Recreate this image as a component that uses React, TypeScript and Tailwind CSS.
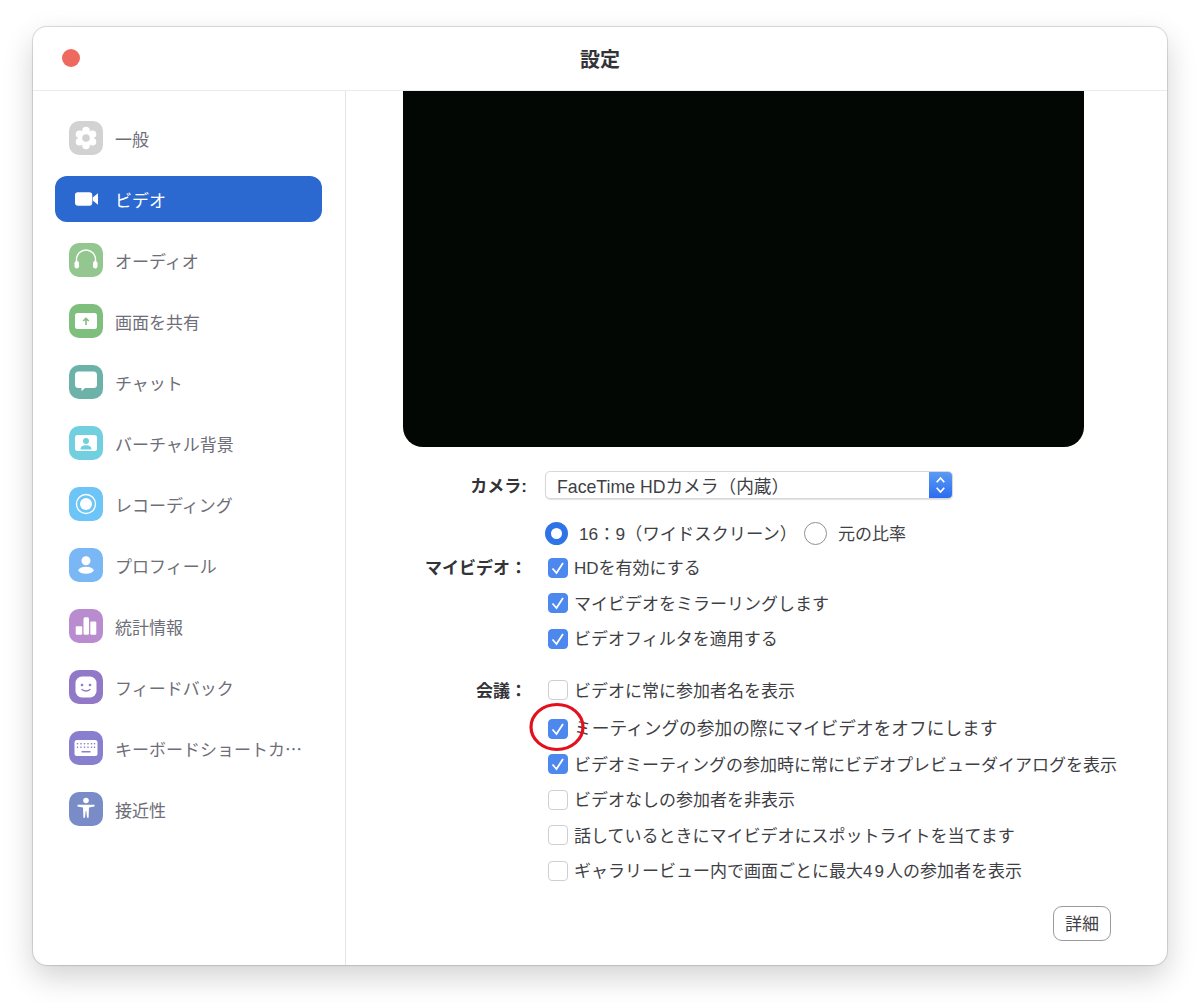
import type { ReactNode } from "react";

const font = { fontFamily: '"Liberation Sans", "Noto Sans CJK JP", sans-serif' };

function Tile({ bg, children }: { bg: string; children: ReactNode }) {
  return (
    <div className={`flex size-[34px] shrink-0 items-center justify-center rounded-[10px] ${bg}`}>
      <svg viewBox="0 0 34 34" className="size-[34px]">
        {children}
      </svg>
    </div>
  );
}

const navItems = [
  {
    label: "一般",
    icon: (
      <Tile bg="bg-[#d2d2d2]">
        <g fill="#fff">
          <circle cx="17" cy="9.500" r="3.800" />
          <circle cx="17" cy="24.500" r="3.800" />
          <circle cx="10.500" cy="13.250" r="3.800" />
          <circle cx="23.500" cy="13.250" r="3.800" />
          <circle cx="10.500" cy="20.750" r="3.800" />
          <circle cx="23.500" cy="20.750" r="3.800" />
          <circle cx="17" cy="17" r="7.500" />
        </g>
        <circle cx="17" cy="17" r="3.800" fill="#d2d2d2" />
      </Tile>
    ),
  },
  {
    label: "ビデオ",
    active: true,
    icon: (
      <svg viewBox="0 0 24 16" className="ml-[6px] mr-[17px] h-[16px] w-[23px] shrink-0">
        <rect x="0" y="1" width="18" height="14" rx="3" fill="#fff" />
        <path d="M18.500 6.500 24 2v12l-5.500-4.500z" fill="#fff" />
      </svg>
    ),
  },
  {
    label: "オーディオ",
    icon: (
      <Tile bg="bg-[#93c78f]">
        <path d="M7.500 20v-3.500a9.500 9.500 0 0 1 19 0V20" fill="none" stroke="#fff" strokeWidth="1.400" />
        <rect x="5.500" y="18" width="4.500" height="7.500" rx="2.200" fill="#fff" />
        <rect x="24" y="18" width="4.500" height="7.500" rx="2.200" fill="#fff" />
      </Tile>
    ),
  },
  {
    label: "画面を共有",
    icon: (
      <Tile bg="bg-[#7fbf7e]">
        <rect x="6" y="9" width="22" height="16" rx="2.500" fill="#fff" />
        <path d="M17 21v-6.500M14.300 17l2.700-2.700 2.700 2.700" fill="none" stroke="#7fbf7e" strokeWidth="1.600" />
      </Tile>
    ),
  },
  {
    label: "チャット",
    icon: (
      <Tile bg="bg-[#6db2a9]">
        <path
          d="M9.500 6.500h15a3.500 3.500 0 0 1 3.500 3.500v9.500a3.500 3.500 0 0 1-3.500 3.500H16l-3.500 3.200V23H9.500A3.500 3.500 0 0 1 6 19.500V10a3.500 3.500 0 0 1 3.500-3.500z"
          fill="#fff"
        />
      </Tile>
    ),
  },
  {
    label: "バーチャル背景",
    icon: (
      <Tile bg="bg-[#72cfe0]">
        <rect x="6" y="9" width="22" height="16" rx="2.500" fill="#fff" />
        <circle cx="17" cy="15" r="3" fill="#72cfe0" />
        <path d="M11.500 23.500c0-3 2.500-4.200 5.500-4.200s5.500 1.200 5.500 4.200z" fill="#72cfe0" />
      </Tile>
    ),
  },
  {
    label: "レコーディング",
    icon: (
      <Tile bg="bg-[#6dc4f6]">
        <circle cx="17" cy="17" r="9.500" fill="none" stroke="#fff" strokeWidth="1.300" />
        <circle cx="17" cy="17" r="6" fill="#fff" />
      </Tile>
    ),
  },
  {
    label: "プロフィール",
    icon: (
      <Tile bg="bg-[#7ab7f5]">
        <circle cx="17" cy="12.800" r="4.500" fill="#fff" />
        <ellipse cx="17" cy="22.300" rx="7.600" ry="3.500" fill="#fff" />
      </Tile>
    ),
  },
  {
    label: "統計情報",
    icon: (
      <Tile bg="bg-[#b98ccf]">
        <rect x="6.700" y="17.300" width="6.500" height="8.400" rx="1" fill="#fff" />
        <rect x="14.500" y="8.300" width="5.500" height="17.400" rx="1.500" fill="#fff" />
        <rect x="21.300" y="12.500" width="6" height="13.200" rx="1" fill="#fff" />
      </Tile>
    ),
  },
  {
    label: "フィードバック",
    icon: (
      <Tile bg="bg-[#9279c8]">
        <rect x="6.500" y="6.500" width="21" height="21" rx="6.500" fill="#fff" />
        <circle cx="13" cy="15" r="1.300" fill="#9279c8" />
        <circle cx="21" cy="15" r="1.300" fill="#9279c8" />
        <path d="M13 19.500c2.200 2 5.800 2 8 0" fill="none" stroke="#9279c8" strokeWidth="1.300" strokeLinecap="round" />
      </Tile>
    ),
  },
  {
    label: "キーボードショートカ…",
    icon: (
      <Tile bg="bg-[#8880cf]">
        <rect x="5.500" y="9" width="23" height="16" rx="2.500" fill="#fff" />
        {[8.5, 12, 15.5, 19, 22.5, 25.5].map((x) => (
          <g key={x} fill="#8880cf">
            <rect x={x - 0.7} y="12" width="1.400" height="1.400" />
            <rect x={x - 0.7} y="15.500" width="1.400" height="1.400" />
          </g>
        ))}
        <rect x="12.500" y="20" width="9" height="1.500" fill="#8880cf" />
      </Tile>
    ),
  },
  {
    label: "接近性",
    icon: (
      <Tile bg="bg-[#7a8cc8]">
        <circle cx="17" cy="8.500" r="2.800" fill="#fff" />
        <path
          d="M8.500 12.700H25.500V14.500L20 15.500 19.600 25.700H18L17.300 19H16.700L16 25.700H14.400L14 15.500 8.500 14.500z"
          fill="#fff"
        />
      </Tile>
    ),
  },
];

function Sidebar() {
  return (
    <aside className="flex w-[313px] shrink-0 flex-col gap-[15px] border-r border-[#e4e4e6] pl-[22px] pr-[23px] pt-[24px]">
      {navItems.map((item) => (
        <div
          key={item.label}
          className={`flex h-[46px] items-center gap-[12px] rounded-[12px] pl-[14px] pr-[8px] font-['Noto_Sans_CJK_JP',sans-serif] text-[17px] ${
            item.active ? "bg-[#2b69d0] text-white" : "text-[#6e6e78]"
          }`}
        >
          {item.icon}
          <span className={`whitespace-nowrap pt-[1px] ${item.active ? "-ml-[12px]" : ""}`}>{item.label}</span>
        </div>
      ))}
    </aside>
  );
}

function Checkbox({ checked }: { checked?: boolean }) {
  return (
    <span
      className={`flex size-[20px] shrink-0 items-center justify-center rounded-[4px] border ${
        checked ? "border-[#4c88ee] bg-[#4c88ee]" : "border-[#cfcfd2] bg-white"
      }`}
    >
      {checked && (
        <svg viewBox="0 0 20 20" className="size-[20px] shrink-0">
          <path d="M4.500 10.500 8.500 15 15 5" fill="none" stroke="#fff" strokeWidth="1.800" />
        </svg>
      )}
    </span>
  );
}

function CheckRow({
  label,
  text,
  checked,
  className = "",
  textClass = "text-[17px]",
}: {
  label?: string;
  text: ReactNode;
  checked?: boolean;
  className?: string;
  textClass?: string;
}) {
  return (
    <div className={`flex h-[35.500px] items-center ${className}`}>
      <div className="w-[181px] shrink-0 pt-[2px] text-right text-[17px] font-bold text-[#333338]">{label}</div>
      <div className="ml-[21px] flex items-center gap-[6px] whitespace-nowrap text-[#3f3f46]">
        <Checkbox checked={checked} />
        <span className={`pt-[2px] ${textClass}`}>{text}</span>
      </div>
    </div>
  );
}

function CameraPane() {
  return (
    <main className="relative flex min-w-0 flex-1 flex-col">
      <div className="ml-[57px] h-[356px] w-[681px] shrink-0 rounded-b-[20px] bg-[#030703]" />

      <div className="mt-[24px] flex h-[28px] items-center">
        <div className="w-[181px] shrink-0 pt-[4px] text-right text-[17px] font-bold text-[#333338]">カメラ:</div>
        <div className="ml-[18px] flex h-[28px] w-[408px] overflow-hidden rounded-[5px] border border-[#d8d8da] bg-white shadow-[0_1px_1px_rgba(0,0,0,0.12)]">
          <div className="flex-1 pl-[11px] pt-[1px] text-[17.700px] leading-[28px] text-[#3f3f46]">FaceTime HDカメラ（内蔵）</div>
          <div className="flex w-[23px] items-center justify-center bg-gradient-to-b from-[#5b9bf3] to-[#2b6cf0]">
            <svg viewBox="0 0 12 20" className="h-[22px] w-[13px]">
              <path d="M2.500 7.500 6 3.500 9.500 7.500M2.500 12.500 6 16.500 9.500 12.500" fill="none" stroke="#fff" strokeWidth="1.600" />
            </svg>
          </div>
        </div>
      </div>

      <div className="ml-[199px] mt-[22px] flex h-[24px] items-center whitespace-nowrap text-[#3f3f46]">
        <span className="size-[23px] rounded-full border-[6px] border-[#2f74e6] bg-white" />
        <span className="ml-[11px] pt-[4px] text-[17.300px]">16：9（ワイドスクリーン）</span>
        <span className="ml-[7px] size-[23px] rounded-full border border-[#8f8f95] bg-white" />
        <span className="ml-[11px] pt-[4px] text-[17px]">元の比率</span>
      </div>

      <div className="mt-[5px]">
        <CheckRow label="マイビデオ：" text="HDを有効にする" checked />
        <CheckRow text="マイビデオをミラーリングします" checked />
        <CheckRow text="ビデオフィルタを適用する" checked />
      </div>

      <div className="mt-[16px]">
        <CheckRow label="会議：" text="ビデオに常に参加者名を表示" />
        <CheckRow text="ミーティングの参加の際にマイビデオをオフにします" checked className="mt-[3px]" textClass="text-[17.700px]" />
        <CheckRow text="ビデオミーティングの参加時に常にビデオプレビューダイアログを表示" checked />
        <CheckRow text="ビデオなしの参加者を非表示" />
        <CheckRow text="話しているときにマイビデオにスポットライトを当てます" />
        <CheckRow
          text={
            <>
              ギャラリービュー内で画面ごとに最大<span className="tracking-[2px]">49</span>人の参加者を表示
            </>
          }
        />
      </div>

      <div className="mr-[56px] mt-[17px] flex justify-end">
        <button className="flex h-[35px] w-[58px] items-center justify-center rounded-[9px] border border-[#9a9aa2] bg-white pt-[4px] text-[17px] text-[#3f3f46]">
          詳細
        </button>
      </div>

      <svg viewBox="0 0 60 52" className="absolute left-[182px] top-[610px] h-[52px] w-[60px]">
        <ellipse cx="29" cy="26" rx="26" ry="22.500" fill="none" stroke="#e3101d" strokeWidth="3.200" />
      </svg>
    </main>
  );
}

export default function App() {
  return (
    <div className="h-[1003px] w-[1200px] bg-white pl-[33px] pt-[27px]" style={font}>
      <div className="flex h-[938px] w-[1134px] flex-col overflow-hidden rounded-[14px] bg-white shadow-[0_0_1px_1px_rgba(0,0,0,0.14),0_12px_30px_rgba(0,0,0,0.18)]">
        <header className="relative flex h-[64px] shrink-0 items-center justify-center border-b border-[#e9ecf2]">
          <span className="absolute left-[29px] top-[22px] size-[18px] rounded-full bg-[#ef6a5e]" />
          <h1 className="pt-[2px] text-[20px] font-bold text-[#333338]">設定</h1>
        </header>
        <div className="flex min-h-0 flex-1">
          <Sidebar />
          <CameraPane />
        </div>
      </div>
    </div>
  );
}
